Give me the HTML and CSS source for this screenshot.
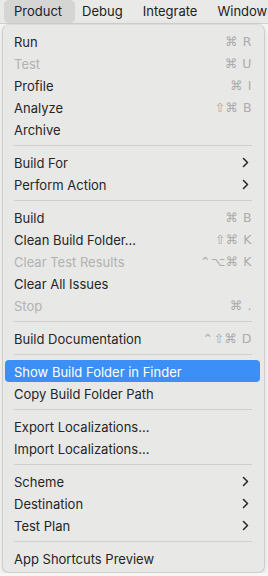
FILE: index.html
```html
<!DOCTYPE html>
<html lang="en">
<head>
  <meta charset="UTF-8">
  <meta name="viewport" content="width=device-width, initial-scale=1.0">
  <title>Product Menu</title>
  <link rel="stylesheet" href="styles.css">
</head>
<body>
  <div class="menubar">
    <div class="bar-item active">Product</div>
    <div class="bar-item">Debug</div>
    <div class="bar-item">Integrate</div>
    <div class="bar-item">Window</div>
  </div>

  <div class="menu">
    <div class="item"><span>Run</span><span class="keys">⌘ R</span></div>
    <div class="item disabled"><span>Test</span><span class="keys">⌘ U</span></div>
    <div class="item"><span>Profile</span><span class="keys">⌘ I</span></div>
    <div class="item"><span>Analyze</span><span class="keys">⇧⌘ B</span></div>
    <div class="item"><span>Archive</span></div>
    <div class="sep"></div>
    <div class="item"><span>Build For</span><svg class="chev" viewBox="0 0 7 11"><path d="M1.5 1.5 5.5 5.5 1.5 9.5"/></svg></div>
    <div class="item"><span>Perform Action</span><svg class="chev" viewBox="0 0 7 11"><path d="M1.5 1.5 5.5 5.5 1.5 9.5"/></svg></div>
    <div class="sep"></div>
    <div class="item"><span>Build</span><span class="keys">⌘ B</span></div>
    <div class="item"><span>Clean Build Folder...</span><span class="keys">⇧⌘ K</span></div>
    <div class="item disabled"><span>Clear Test Results</span><span class="keys">⌃⌥⌘ K</span></div>
    <div class="item"><span>Clear All Issues</span></div>
    <div class="item disabled"><span>Stop</span><span class="keys">⌘ .</span></div>
    <div class="sep"></div>
    <div class="item"><span>Build Documentation</span><span class="keys">⌃⇧⌘ D</span></div>
    <div class="sep"></div>
    <div class="item selected"><span>Show Build Folder in Finder</span></div>
    <div class="item"><span>Copy Build Folder Path</span></div>
    <div class="sep"></div>
    <div class="item"><span>Export Localizations...</span></div>
    <div class="item"><span>Import Localizations...</span></div>
    <div class="sep"></div>
    <div class="item"><span>Scheme</span><svg class="chev" viewBox="0 0 7 11"><path d="M1.5 1.5 5.5 5.5 1.5 9.5"/></svg></div>
    <div class="item"><span>Destination</span><svg class="chev" viewBox="0 0 7 11"><path d="M1.5 1.5 5.5 5.5 1.5 9.5"/></svg></div>
    <div class="item"><span>Test Plan</span><svg class="chev" viewBox="0 0 7 11"><path d="M1.5 1.5 5.5 5.5 1.5 9.5"/></svg></div>
    <div class="sep"></div>
    <div class="item"><span>App Shortcuts Preview</span></div>
  </div>
</body>
</html>
```

FILE: styles.css
```css
body {
  margin: 0;
  padding: 0;
  background-color: #f7f7f7;
  font-family: 'Inter', 'DejaVu Sans', sans-serif;
  font-size: 13px;
  color: #262626;
}

.menubar {
  display: flex;
  align-items: center;
  height: 24px;
  padding-left: 4px;
  background-color: #e9e9e8;
  border-bottom: 1px solid #d2d2d2;
  box-sizing: border-box;
  white-space: nowrap;
  overflow: hidden;
}

.bar-item {
  height: 23px;
  line-height: 23px;
  padding: 0 10px;
  font-size: 13px;
  color: #222;
  border-radius: 5px;
}

.bar-item.active {
  padding-right: 13px;
  margin-right: -3px;
  background-color: #d5d5d4;
}

.menu {
  width: 263px;
  margin-left: 2px;
  padding: 5px 0 3px;
  background-color: #e8e8e7;
  border: 1px solid #cdcdcd;
  border-top-color: #dcdcdc;
  border-radius: 7px;
  box-sizing: border-box;
  box-shadow: 0 2px 6px rgba(0, 0, 0, 0.12);
}

.item {
  display: flex;
  justify-content: space-between;
  align-items: center;
  height: 22px;
  margin: 0 4px 0 2px;
  padding: 1px 8px 0 9px;
  box-sizing: border-box;
  border-radius: 4px;
}

.item.disabled {
  color: #b2b2b2;
}

.item.selected {
  background-color: #3b8ff6;
  color: #fff;
}

.keys {
  font-family: 'DejaVu Sans', sans-serif;
  font-size: 12.5px;
  color: #acacac;
  letter-spacing: 0.5px;
}

.chev {
  width: 7px;
  height: 11px;
  margin-right: 3px;
  fill: none;
  stroke: #2a2a2a;
  stroke-width: 1.6;
  stroke-linecap: round;
  stroke-linejoin: round;
}

.sep {
  height: 1px;
  margin: 5px 12px 5px 11px;
  background-color: #cfcfcf;
}
```
